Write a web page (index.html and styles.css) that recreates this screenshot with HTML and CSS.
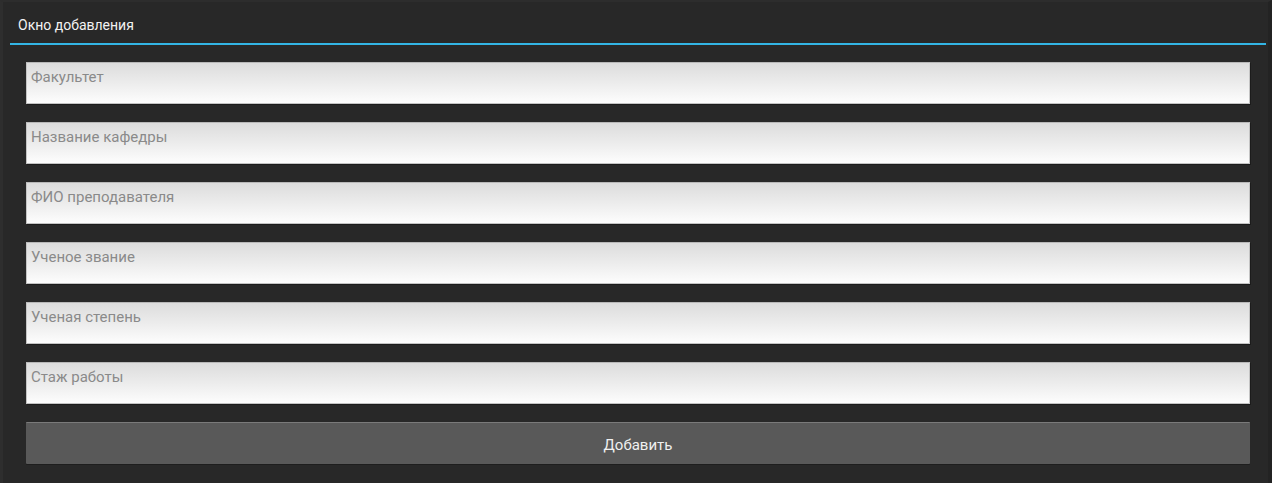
FILE: index.html
```html
<!DOCTYPE html>
<html lang="ru">
<head>
<meta charset="utf-8">
<link rel="stylesheet" href="styles.css">
</head>
<body>
<div class="window">
  <div class="header">
    <div class="title">Окно добавления</div>
  </div>
  <div class="form">
    <div class="field"><span class="hint">Факультет</span></div>
    <div class="field"><span class="hint">Название кафедры</span></div>
    <div class="field"><span class="hint">ФИО преподавателя</span></div>
    <div class="field"><span class="hint">Ученое звание</span></div>
    <div class="field"><span class="hint">Ученая степень</span></div>
    <div class="field"><span class="hint">Стаж работы</span></div>
    <div class="button">Добавить</div>
  </div>
</div>
</body>
</html>
```

FILE: styles.css
```css
html, body {
  margin: 0;
  padding: 0;
  background: #282828;
}
body {
  width: 1272px;
  height: 483px;
  overflow: hidden;
  font-family: Roboto, "Liberation Sans", sans-serif;
}
.window {
  height: 483px;
  box-sizing: border-box;
  border-left: 3px solid #2e2e2e;
  border-top: 2px solid #2d2d2d;
  border-right: 4px solid #232323;
  background: #282828;
}
.header {
  margin: 0 2px 0 7px;
  height: 41px;
  border-bottom: 2px solid #33b5e5;
  display: flex;
  align-items: center;
}
.title {
  padding-left: 8px;
  padding-top: 4px;
  color: #f2f2f2;
  font-size: 14px;
}
.form {
  padding: 17px 18px 0 23px;
  display: flex;
  flex-direction: column;
  gap: 18px;
}
.field {
  height: 42px;
  box-sizing: border-box;
  border: 1px solid #c4c4c4;
  border-top-color: #b8b8b8;
  background: linear-gradient(to bottom, #dcdcdc 0%, #ececec 50%, #fdfdfd 100%);
  box-shadow: 1px 1px 0 #1c1c1c;
  padding: 4px 0 0 4px;
}
.hint {
  color: #8a8a8a;
  font-size: 15px;
  line-height: 18px;
}
.button {
  height: 42px;
  box-sizing: border-box;
  background: #595959;
  border-top: 1px solid #7a7a7a;
  box-shadow: 0 1px 0 #1e1e1e;
  border-radius: 1px;
  color: #f0f0f0;
  font-size: 15px;
  display: flex;
  align-items: center;
  justify-content: center;
  padding-top: 2px;
}
```
